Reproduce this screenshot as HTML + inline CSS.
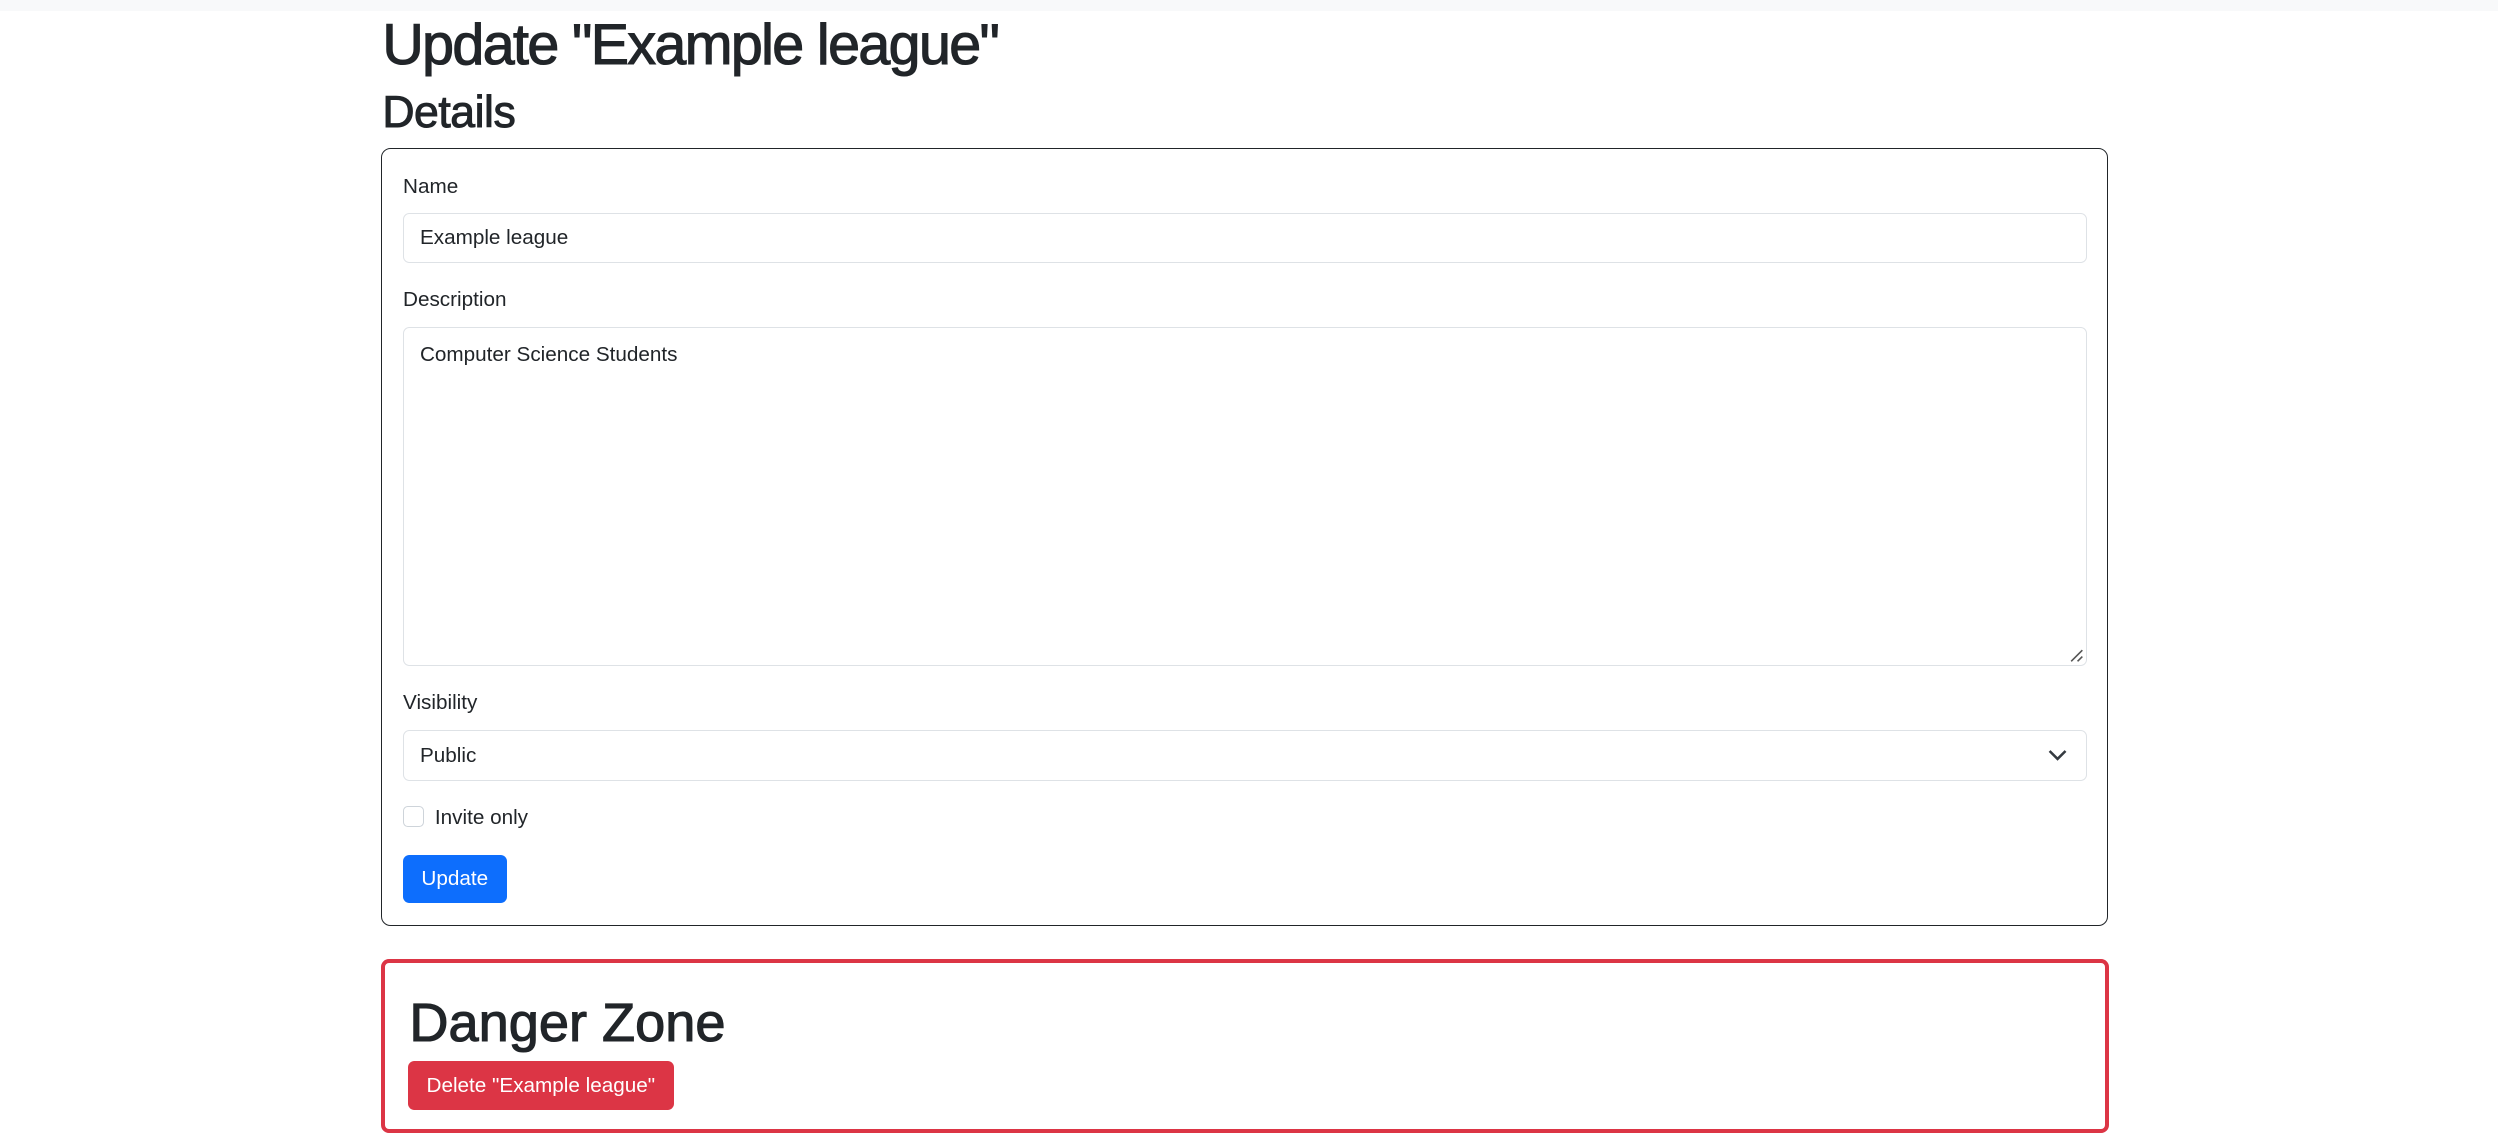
<!DOCTYPE html>
<html style="overflow:hidden;height:712px"><head><meta charset="utf-8"><style>
html{zoom:1.593}
body{margin:0;background:#fff;font-family:"Liberation Sans",sans-serif;color:#212529;width:1568px;height:712px;overflow:hidden;position:relative}
.top{position:absolute;left:0;top:0;width:1568px;height:7px;background:#f8f9fa}
.a{position:absolute;white-space:nowrap}
h1{position:absolute;left:240px;top:9px;margin:0;font-size:36px;font-weight:normal;-webkit-text-stroke:0.7px #212529;letter-spacing:-1px;line-height:40px}
h2{position:absolute;left:240px;top:54px;margin:0;font-size:28px;font-weight:normal;-webkit-text-stroke:0.6px #212529;letter-spacing:-0.3px;line-height:34px}
.card{position:absolute;left:239px;top:93px;width:1083px;height:487px;border:1px solid #212529;border-radius:6px}
.lbl{font-size:13px;left:253px}
.in{position:absolute;left:253px;width:1055px;border:1px solid #dee2e6;border-radius:4px;font-size:13px;box-sizing:border-box;padding-left:10px}
.btn{position:absolute;color:#fff;font-size:13px;border-radius:4px;display:flex;align-items:center;justify-content:center}
</style></head><body>
<div class="top"></div>
<h1>Update "Example league"</h1>
<h2>Details</h2>
<div class="card"></div>
<div class="a lbl" style="top:110px">Name</div>
<div class="in" style="top:134px;height:31px;line-height:30px;width:1057px">Example league</div>
<div class="a lbl" style="top:181px">Description</div>
<div class="in" style="top:205px;height:213px;width:1057px;padding-top:9px;line-height:16px">Computer Science Students
<svg style="position:absolute;right:1px;bottom:1px" width="10" height="10"><path d="M9 2L2 9M9 6L6 9" stroke="#555" stroke-width="1"/></svg></div>
<div class="a lbl" style="top:434px">Visibility</div>
<div class="in" style="top:458px;height:32px;line-height:31px;width:1057px">Public
<svg style="position:absolute;right:12px;top:10px" width="12" height="10"><path d="M1 2.5L6 7.5L11 2.5" stroke="#343a40" stroke-width="1.6" fill="none"/></svg></div>
<div class="a" style="left:253px;top:506px;width:12px;height:12px;border:1px solid #ced4da;border-radius:3px"></div>
<div class="a" style="left:273px;top:506px;font-size:13px">Invite only</div>
<div class="btn" style="left:253px;top:537px;width:65px;height:30px;background:#0d6efd">Update</div>
<div class="a" style="left:239px;top:602px;width:1080px;height:104px;border:3px solid #dc3545;border-radius:5px"></div>
<div class="a" style="left:257px;top:620px;font-size:34px;-webkit-text-stroke:0.7px #212529;line-height:44px">Danger Zone</div>
<div class="btn" style="left:256px;top:666px;width:167px;height:31px;background:#dc3545">Delete "Example league"</div>
</body></html>
